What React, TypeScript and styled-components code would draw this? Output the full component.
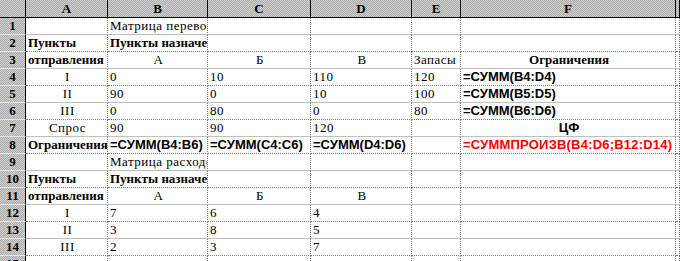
import { Fragment } from "react";
import styled, { createGlobalStyle, css } from "styled-components";

const GlobalStyle = createGlobalStyle`
  html, body {
    margin: 0;
    padding: 0;
    background: #ffffff;
    overflow: hidden;
  }
`;

type Kind = "plain" | "bold" | "formula" | "red";
type Align = "left" | "center";

interface CellData {
  text?: string;
  kind?: Kind;
  align?: Align;
}

const COLUMNS = ["A", "B", "C", "D", "E", "F", ""];
const WIDTHS = "26px 82px 100px 103px 101px 49px 215px 1fr";

const p = (text: string, align: Align = "left"): CellData => ({ text, kind: "plain", align });
const b = (text: string, align: Align = "left"): CellData => ({ text, kind: "bold", align });
const f = (text: string, align: Align = "left"): CellData => ({ text, kind: "formula", align });
const e: CellData = {};

const ROWS: CellData[][] = [
  [e, p("Матрица перевозок"), e, e, e, e],
  [b("Пункты"), b("Пункты назначения"), e, e, e, e],
  [b("отправления"), p("А", "center"), p("Б", "center"), p("В", "center"), p("Запасы"), b("Ограничения", "center")],
  [p("I", "center"), p("0"), p("10"), p("110"), p("120"), f("=СУММ(B4:D4)")],
  [p("II", "center"), p("90"), p("0"), p("10"), p("100"), f("=СУММ(B5:D5)")],
  [p("III", "center"), p("0"), p("80"), p("0"), p("80"), f("=СУММ(B6:D6)")],
  [p("Спрос", "center"), p("90"), p("90"), p("120"), e, f("ЦФ", "center")],
  [b("Ограничения"), f("=СУММ(B4:B6)"), f("=СУММ(C4:C6)"), f("=СУММ(D4:D6)"), e, { text: "=СУММПРОИЗВ(B4:D6;B12:D14)", kind: "red" }],
  [e, p("Матрица расходов"), e, e, e, e],
  [b("Пункты"), b("Пункты назначения"), e, e, e, e],
  [b("отправления"), p("А", "center"), p("Б", "center"), p("В", "center"), e, e],
  [p("I", "center"), p("7"), p("6"), p("4"), e, e],
  [p("II", "center"), p("3"), p("8"), p("5"), e, e],
  [p("III", "center"), p("2"), p("3"), p("7"), e, e],
  [e, e, e, e, e, e],
];

const Sheet = styled.div`
  display: grid;
  grid-template-columns: ${WIDTHS};
  grid-auto-rows: 17px;
  grid-template-rows: 18px;
  width: 680px;
  height: 261px;
  overflow: hidden;
`;

const headerFill = css`
  background-color: #c4c4c4;
  background-image: repeating-conic-gradient(#a9a9a9 0 25%, #d2d2d2 0 50%);
  background-size: 2px 2px;
`;

const Corner = styled.div`
  ${headerFill};
  border-right: 1px solid #000;
  border-bottom: 1px solid #000;
`;

const ColHead = styled.div`
  ${headerFill};
  border-right: 1px solid #000;
  border-bottom: 1px solid #000;
  display: flex;
  align-items: center;
  justify-content: center;
  font-family: "Liberation Serif", "Times New Roman", serif;
  font-weight: bold;
  font-size: 13px;
  color: #000;
`;

const RowHead = styled.div`
  ${headerFill};
  border-right: 1px solid #000;
  border-bottom: 1px solid #e6e6e6;
  display: flex;
  align-items: flex-end;
  justify-content: center;
  padding-bottom: 2px;
  box-sizing: border-box;
  font-family: "Liberation Serif", "Times New Roman", serif;
  font-weight: bold;
  font-size: 13px;
  line-height: 13px;
  color: #000;
`;

const Cell = styled.div<{ $dotted: boolean; $align: Align; $kind: Kind }>`
  box-sizing: border-box;
  border-right: 1px dotted #808080;
  border-bottom: ${({ $dotted }) => ($dotted ? "1px dotted #808080" : "1px solid #c0c0c0")};
  display: flex;
  align-items: flex-end;
  justify-content: ${({ $align }) => ($align === "center" ? "center" : "flex-start")};
  padding: 0 0 2px 2px;
  overflow: hidden;
  white-space: nowrap;
  line-height: 13px;
  color: ${({ $kind }) => ($kind === "red" ? "#ff0000" : "#000")};
  ${({ $kind }) =>
    $kind === "plain"
      ? css`
          font-family: "Liberation Serif", "Times New Roman", serif;
          font-size: 13px;
          letter-spacing: 0.5px;
        `
      : $kind === "bold"
      ? css`
          font-family: "Liberation Serif", "Times New Roman", serif;
          font-size: 13px;
          font-weight: bold;
        `
      : css`
          font-family: "Liberation Sans", Arial, sans-serif;
          font-size: 13px;
          font-weight: bold;
        `}
  ${({ $kind }) =>
    $kind === "red" &&
    css`
      letter-spacing: 0.2px;
    `}
`;

export default function App() {
  return (
    <>
      <GlobalStyle />
      <Sheet>
        <Corner />
        {COLUMNS.map((c, i) => (
          <ColHead key={i}>{c}</ColHead>
        ))}
        {ROWS.map((row, r) => (
          <Fragment key={r}>
            <RowHead>{r + 1}</RowHead>
            {[...row, e].map((cell, c) => (
              <Cell
                key={c}
                $dotted={(r + 1) % 2 === 0}
                $align={cell.align ?? "left"}
                $kind={cell.kind ?? "plain"}
              >
                {cell.text}
              </Cell>
            ))}
          </Fragment>
        ))}
      </Sheet>
    </>
  );
}
